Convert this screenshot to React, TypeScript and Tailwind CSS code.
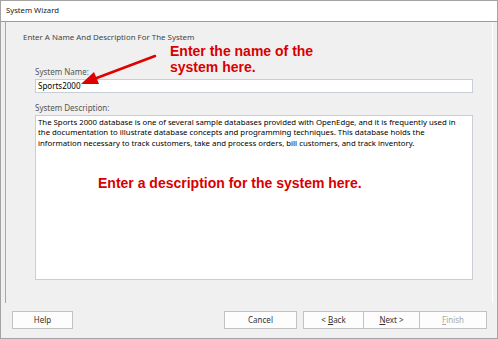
import React from "react";

const ui = { fontFamily: '"Noto Sans", "Open Sans", sans-serif' };
const arial = { fontFamily: '"Liberation Sans", Arial, sans-serif' };

const Boton = ({ w, children, className = "" }: { w: string; children: React.ReactNode; className?: string }) => (
  <div className={`${w} h-[18px] flex items-center justify-center border border-[#c2c2c2] bg-[#fdfdfd] text-[8px] ${className}`}>
    {children}
  </div>
);

export default function App() {
  return (
    <div className="w-[498px] h-[339px] border border-[#a3a3a3] bg-[#f0f0f0] flex flex-col relative text-[#333]" style={ui}>
      {/* barra de titulo */}
      <div className="h-[21px] bg-white border-b border-[#9c9c9c] flex items-center pl-[5px] text-[7.7px] text-[#222]">
        System Wizard
      </div>

      {/* panel principal */}
      <div className="mx-[4px] h-[281px] border-l border-[#a8a8a8] border-r border-r-white flex flex-col">
        <div className="pl-[17px] pt-[9px] text-[7.9px] text-[#444] leading-[12px]">
          Enter A Name And Description For The System
        </div>
        <div className="pl-[29px] w-[467px] flex flex-col mt-[24px]">
          <div className="text-[8px] text-[#555] leading-[10px]">System Name:</div>
          <div className="mt-[2px] h-[14px] border border-[#c9ced6] bg-white flex items-center pl-[2px] text-[8px] text-black">
            Sports2000
          </div>
          <div className="mt-[10px] text-[8px] text-[#555] leading-[10px]">System Description:</div>
          <div className="mt-[2px] h-[165px] border border-[#c9ced6] bg-white px-[2px] pt-[1px] text-[7.8px] text-black leading-[10.4px]">
            <div>The Sports 2000 database is one of several sample databases provided with OpenEdge, and it is frequently used in</div>
            <div>the documentation to illustrate database concepts and programming techniques. This database holds the</div>
            <div>information necessary to track customers, take and process orders, bill customers, and track inventory.</div>
          </div>
        </div>
      </div>

      {/* botones */}
      <div className="flex items-start pt-[8px] pl-[11px]">
        <Boton w="w-[61px]">Help</Boton>
        <Boton w="w-[73px]" className="ml-[151px]">Cancel</Boton>
        <Boton w="w-[61px]" className="ml-[6px]">
          &lt;&nbsp;<span className="underline">B</span>ack
        </Boton>
        <Boton w="w-[57px]" className="-ml-px">
          <span className="underline">N</span>ext&nbsp;&gt;
        </Boton>
        <Boton w="w-[68px]" className="-ml-px text-[#a8a8a8]">
          <span className="underline">F</span>inish
        </Boton>
      </div>

      {/* anotaciones en rojo */}
      <div className="absolute left-[169px] top-[42px] text-[14px] font-bold text-[#d80000] leading-[16px]" style={arial}>
        <div>Enter the name of the</div>
        <div>system here.</div>
      </div>
      <svg className="absolute left-0 top-0" width="498" height="339" viewBox="0 0 498 339">
        <line x1="154" y1="55" x2="93" y2="78" stroke="#e00000" strokeWidth="2.5" strokeLinecap="round" />
        <polygon points="80,83 98,83 93,71" fill="#e00000" />
      </svg>
      <div className="absolute left-[97px] top-[174px] text-[14px] font-bold text-[#d80000] leading-[16px]" style={arial}>
        Enter a description for the system here.
      </div>
    </div>
  );
}
